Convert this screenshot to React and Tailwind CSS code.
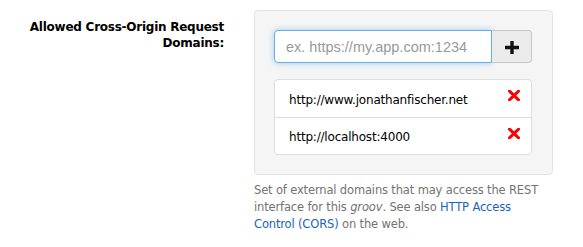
import React from "react";

function PlusIcon() {
  return (
    <svg width="14" height="13" viewBox="0 0 14 13">
      <path d="M5.3 0h3.4v4.8H14v3.4H8.7V13H5.3V8.2H0V4.8h5.3z" fill="#111" />
    </svg>
  );
}

function RemoveIcon() {
  return (
    <svg width="12" height="11" viewBox="0 0 12 11">
      <path
        d="M1.5 1.2 L10.5 9.8 M10.5 1.2 L1.5 9.8"
        stroke="#ff0000"
        strokeWidth="3"
        strokeLinecap="square"
      />
    </svg>
  );
}

const domains = ["http://www.jonathanfischer.net", "http://localhost:4000"];

export default function App() {
  return (
    <div
      className="flex w-[583px] h-[247px] bg-white text-[#333]"
      style={{ fontFamily: "'DejaVu Sans', Verdana, sans-serif" }}
    >
      <div className="w-[224px] shrink-0 pt-[19px] text-right text-[12px] tracking-[-0.25px] leading-[16px] font-bold text-black">
        Allowed Cross-Origin Request
        <br />
        Domains:
      </div>
      <div className="ml-[30px] w-[299px] pt-[10px]">
        <div className="bg-[#f5f5f5] border border-[#e3e3e3] rounded-[4px] pt-[19px] pb-[19px] pl-[19px] pr-[20px]">
          <div className="flex h-[33px]">
            <input
              placeholder="ex. https://my.app.com:1234"
              className="w-[218px] h-[33px] px-[11px] border border-[#66afe9] rounded-l-[4px] bg-white text-[14.5px] outline-none shadow-[0_0_6px_rgba(102,175,233,0.6)] placeholder:text-[#999]"
              style={{ fontFamily: "'Liberation Sans', Arial, sans-serif" }}
            />
            <button className="flex-1 flex items-center justify-center pt-[2px] bg-[#ebebeb] border border-[#c8c8c8] border-l-0 rounded-r-[4px]">
              <PlusIcon />
            </button>
          </div>
          <ul className="mt-[16px] bg-white border border-[#dddddd] rounded-[4px]">
            {domains.map((d, i) => (
              <li
                key={d}
                className={`flex items-center justify-between h-[37px] pl-[14px] pr-[11px] text-[12px] tracking-[-0.2px] text-black ${i > 0 ? "border-t border-[#dddddd]" : ""}`}
              >
                <span className="pt-[2px]">{d}</span>
                <span className="-mt-[6px]">
                  <RemoveIcon />
                </span>
              </li>
            ))}
          </ul>
        </div>
        <p className="mt-[7px] text-[11.5px] tracking-[-0.15px] leading-[17px] text-[#737373]">
          Set of external domains that may access the REST interface for this{" "}
          <em>groov</em>. See also{" "}
          <a className="text-[#1565c0]">HTTP Access Control (CORS)</a> on the
          web.
        </p>
      </div>
    </div>
  );
}
